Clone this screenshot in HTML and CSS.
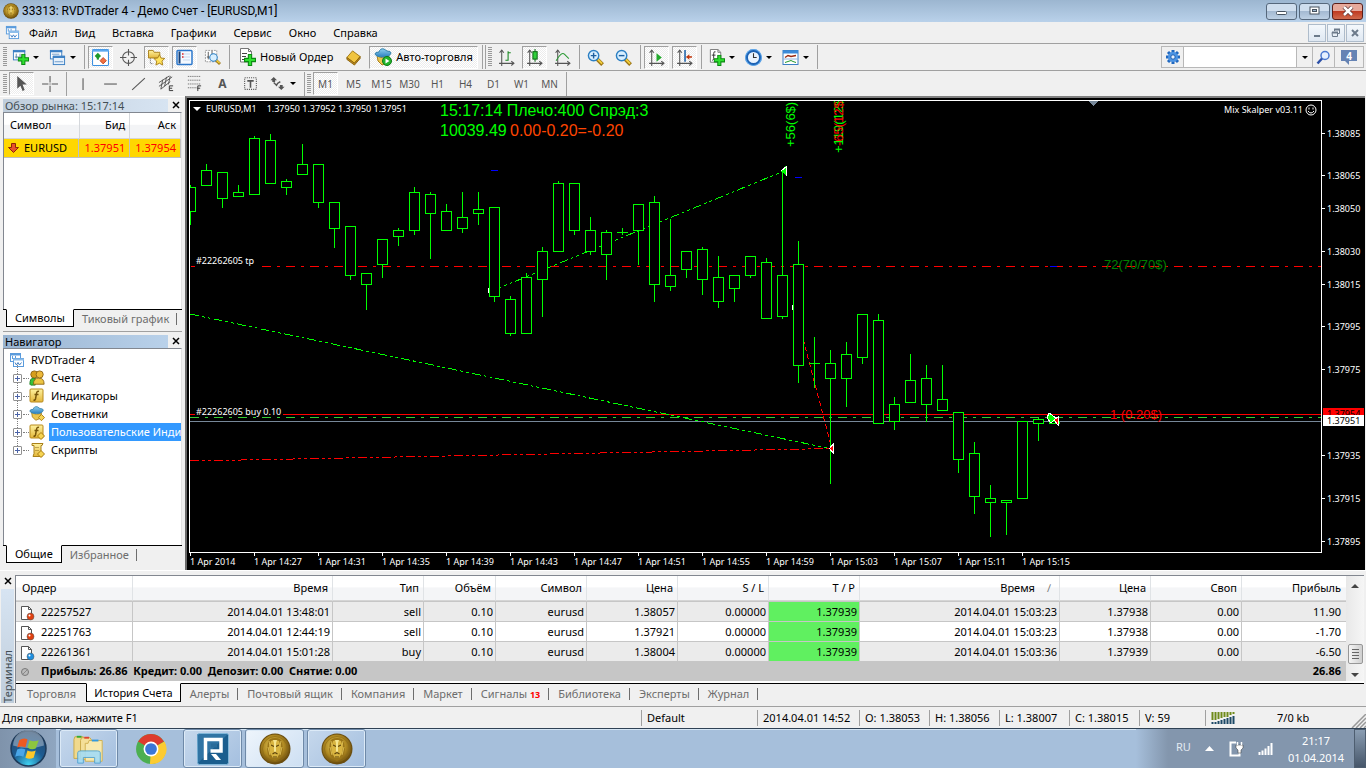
FILE: index.html
```html
<!DOCTYPE html>
<html lang="ru">
<head>
<meta charset="utf-8">
<title>33313: RVDTrader 4 - Демо Счет - [EURUSD,M1]</title>
<link rel="stylesheet" href="styles.css">
</head>
<body>
<svg class="defs" aria-hidden="true">
  <defs>
    <radialGradient id="gold" cx=".45" cy=".4" r=".6"><stop offset="0" stop-color="#e8d060"/><stop offset=".6" stop-color="#b08a22"/><stop offset="1" stop-color="#6b4c0c"/></radialGradient>
    <linearGradient id="ygrad" x1="0" y1="0" x2="0" y2="1"><stop offset="0" stop-color="#fff3a0"/><stop offset="1" stop-color="#e3b63a"/></linearGradient>
    <linearGradient id="bgrad" x1="0" y1="0" x2="0" y2="1"><stop offset="0" stop-color="#8fd0f0"/><stop offset="1" stop-color="#2a7fc0"/></linearGradient>
    <radialGradient id="orb" cx=".5" cy=".95" r=".9"><stop offset="0" stop-color="#3fd0f0"/><stop offset=".5" stop-color="#1c5c92"/><stop offset="1" stop-color="#274a70"/></radialGradient>
    <symbol id="lion" viewBox="0 0 32 32"><circle cx="16" cy="16" r="15.5" fill="#6b4f12"/><circle cx="16" cy="16" r="14.500" fill="url(#gold)"/><circle cx="16" cy="16" r="12.500" fill="none" stroke="#8a6a18" stroke-width=".7"/><path d="M9 9q1-4 7-4t7 4l1 7-1 6-3 4-4 2-4-2-3-4-1-6z" fill="#9a7518"/><path d="M12 8q4-2 8 0l2 6-1 6-3 5h-4l-3-5-1-6z" fill="#d8b440"/><path d="M12 12l3 1.500M20 12l-3 1.500M13.500 21l2.500-1.500 2.500 1.500M14 24h4" stroke="#5f450c" fill="none" stroke-width="1.200"/><path d="M10 8l1 5M9 14l2 8M22 8l-1 5M23 14l-2 8" stroke="#e8cc60" fill="none" stroke-width=".8"/><path d="M15 9h2v9l-1 1.500-1-1.500zM14 7h4l-1 3h-2z" fill="#f5e590"/></symbol>
    <symbol id="plus" viewBox="0 0 11 11"><path d="M4 .5h3v3.5h3.500v3H7v3.500H4V7H.5V4H4z" fill="#2fe02f" stroke="#0b8a12"/></symbol>
    <symbol id="charts" viewBox="0 0 16 16"><rect x="1.500" y="1.500" width="10" height="8" fill="#fff" stroke="#5a9bdc"/><path d="M1 2.500h11" stroke="#5a9bdc" stroke-width="2"/><path d="M3.500 4v3M6.500 4v2" stroke="#5a9bdc"/><rect x="4.500" y="6.500" width="10" height="8" fill="#fff" stroke="#5a9bdc"/><path d="M4 7.500h11" stroke="#8bbcea" stroke-width="2"/><path d="M6 10.500l1.500 2.500 1.500-2.500 1.500 2.500 2-2.500" fill="none" stroke="#3f7ec4"/></symbol>
    <symbol id="axes" viewBox="0 0 16 16"><path d="M3.500 1v15M1 13.500h14" stroke="#555" fill="none"/><path d="M1.500 3.500l2-2.500 2 2.500M12.500 11.500l2.500 2-2.500 2" stroke="#555" fill="none"/></symbol>
    <symbol id="page" viewBox="0 0 16 16"><path d="M2.500.5h8l3 3v10.500h-11z" fill="#fff" stroke="#777"/><path d="M10.500.5v3h3" fill="none" stroke="#777"/></symbol>
    <symbol id="hat" viewBox="0 0 18 18"><path d="M3 7q5 5 12 1l-2 7-5 2-4-4z" fill="#ecc650" stroke="#a97f1a"/><path d="M1 6q0-2 4-2 1-4 5-3l3 2q4 0 4 2-1 4-8 4-7 0-8-3z" fill="url(#bgrad)" stroke="#3683ad"/></symbol>
    <symbol id="diamond" viewBox="0 0 8 8"><path d="M4 .5L7.500 4 4 7.500.5 4z" fill="#f6d452" stroke="#a87a10"/></symbol>
    <symbol id="fx" viewBox="0 0 16 16"><rect x="1" y="1" width="13" height="13" rx="1" fill="url(#ygrad)" stroke="#b88a1c"/><path d="M10 3.500q-2-1-2.500 2L6.500 11q-.5 1.500-2 1M5.500 6.500h4" fill="none" stroke="#76550a" stroke-width="1.500"/></symbol>
    <symbol id="lens" viewBox="0 0 18 18"><path d="M10.500 10.500l6 6" stroke="#9b7414" stroke-width="4"/><path d="M11 10.500l5 5" stroke="#f2cf3c" stroke-width="2"/><circle cx="7" cy="7" r="5.500" fill="#d8efff" stroke="#2b7fc3" stroke-width="1.500"/></symbol>
    <symbol id="deal" viewBox="0 0 16 16"><path d="M2.500 1.500h7l3 3v10h-10z" fill="#fff" stroke="#555"/><path d="M9.500 1.500v3h3" fill="none" stroke="#555"/><circle cx="11.500" cy="11.500" r="3.500" fill="currentColor" stroke="#555" stroke-width=".5"/><circle cx="10.500" cy="10.500" r="1" fill="#fff"/></symbol>
  </defs>
</svg>

<header class="titlebar">
  <svg class="app-icon" viewBox="0 0 32 32"><use href="#lion"/></svg>
  <h1 class="window-title">33313: RVDTrader 4 - Демо Счет - [EURUSD,M1]</h1>
  <div class="window-buttons">
    <button class="win-btn" aria-label="Свернуть"><svg width="12" height="10"><rect x=".5" y="5.500" width="10" height="3" rx="1" fill="#fff" stroke="#46525f"/></svg></button>
    <button class="win-btn" aria-label="Развернуть"><svg width="12" height="10"><rect x="1" y="1" width="9" height="7" fill="#fff" stroke="#46525f"/><rect x="3.500" y="3.500" width="4" height="2" fill="#9fb8d0" stroke="#46525f"/></svg></button>
    <button class="win-btn win-close" aria-label="Закрыть"><svg width="12" height="10"><path d="M2 1l8 8M10 1l-8 8" stroke="#5a3030" stroke-width="4"/><path d="M2 1l8 8M10 1l-8 8" stroke="#fff" stroke-width="2.500"/></svg></button>
  </div>
</header>

<nav class="menubar">
  <svg class="menu-icon" viewBox="0 0 16 16"><use href="#charts"/></svg>
  <button>Файл</button><button>Вид</button><button>Вставка</button><button>Графики</button><button>Сервис</button><button>Окно</button><button>Справка</button>
  <div class="mdi-buttons">
    <button aria-label="Свернуть окно"><svg width="10" height="10"><path d="M2 8h6" stroke="#6c7a8a" stroke-width="2"/></svg></button>
    <button aria-label="Восстановить окно"><svg width="10" height="10"><path d="M3.500 3V1.500h5v4H7M1 4.500h5.500v4h-5z" fill="none" stroke="#6c7a8a"/><path d="M3 1.500h6M1 4.500h6" stroke="#6c7a8a" stroke-width="2"/></svg></button>
    <button aria-label="Закрыть окно"><svg width="10" height="10"><path d="M2 2l6 6M8 2L2 8" stroke="#6c7a8a" stroke-width="2"/></svg></button>
  </div>
</nav>

<div class="toolbar toolbar-main">
  <i class="grip"></i>
  <button class="tool drop" aria-label="Новый график"><svg viewBox="0 0 18 18"><rect x="1.500" y="1.500" width="12" height="10" fill="#fff" stroke="#3b7fc4"/><path d="M1 2.500h13" stroke="#3b7fc4" stroke-width="2"/><path d="M4.500 5v5M3 8.500h8M8.500 5v3" stroke="#5b87a8"/><use href="#plus" x="6" y="5" width="12" height="12"/></svg></button>
  <button class="tool drop" aria-label="Профили"><svg viewBox="0 0 18 18"><rect x="1.500" y="1.500" width="12" height="9" fill="#fff" stroke="#3b7fc4"/><path d="M1 2.500h13" stroke="#3b7fc4" stroke-width="2"/><rect x="4.500" y="7.500" width="12" height="9" fill="#e7f1fb" stroke="#3b7fc4"/><path d="M4 8.500h13" stroke="#3b7fc4" stroke-width="2"/><path d="M3 5.500h8M6 13.500h9" stroke="#6a98c8"/></svg></button>
  <i class="sep"></i>
  <button class="tool on" aria-label="Обзор рынка"><svg viewBox="0 0 16 16"><rect x=".5" y=".5" width="15" height="15" rx="1" fill="#fff" stroke="#3b8fe0"/><path d="M0 1.500h16" stroke="#5ba8ee" stroke-width="2"/><path d="M5.500 3.500L8.500 6.500 5.500 9.500 2.500 6.500z" fill="#1d9a2c"/><path d="M5.500 7v3" stroke="#1d9a2c" stroke-width="2"/><path d="M10.500 14l-3-3 3-3 3 3z" fill="#f07040" stroke="#b03010" stroke-width=".7"/></svg></button>
  <button class="tool" aria-label="Окно данных"><svg viewBox="0 0 16 16"><circle cx="8" cy="8" r="5.500" fill="none" stroke="#555"/><path d="M8 0v6M8 10v6M0 8h6M10 8h6" stroke="#555"/></svg></button>
  <button class="tool on" aria-label="Навигатор"><svg viewBox="0 0 18 18"><path d="M.5 1.500h5l1 2h6v6H.5z" fill="url(#ygrad)" stroke="#a9801a"/><path d="M2.500 10v5.500h3" stroke="#555" stroke-dasharray="1 1" fill="none"/><path d="M12 6l1.800 3.600 4 .4-3 2.800.8 4.200-3.600-2-3.600 2 .8-4.200-3-2.800 4-.4z" fill="#ffe25c" stroke="#a9801a"/></svg></button>
  <button class="tool on" aria-label="Терминал"><svg viewBox="0 0 17 16"><rect x="1" y="1" width="15" height="14" rx="1" fill="#f4f9ff" stroke="#2c78cc" stroke-width="1.500"/><path d="M3.500 2v12" stroke="#173f74" stroke-width="2"/><path d="M7 4.500h7M7 7.500h7M7 10.500h7" stroke="#c6d9ef"/><path d="M6 4.500h1.500M6 7.500h1.500" stroke="#e02020" stroke-width="1.500"/></svg></button>
  <button class="tool" aria-label="Тестер стратегий"><svg viewBox="0 0 18 18"><rect x="1.500" y="1.500" width="12" height="12" fill="#fff" stroke="#999" stroke-dasharray="2 1"/><path d="M4.500 3v8M8.500 2v6M3 8.500h3" stroke="#555"/><use href="#lens" x="5" y="4" width="13" height="13"/></svg></button>
  <i class="sep"></i>
  <button class="tool labelled"><svg viewBox="0 0 18 18"><use href="#page" x="0" y="0" width="16" height="16"/><path d="M4 5.500h5M4 8.500h4M4 11.500h4" stroke="#444"/><use href="#plus" x="6" y="6" width="12" height="12"/></svg>Новый Ордер</button>
  <button class="tool" aria-label="Редактор"><svg viewBox="0 0 18 18"><path d="M8 2l8 6-6 7-8-6z" fill="#f0c440" stroke="#a3780f"/><path d="M2 9v2l8 6 6-7V8l-6 7z" fill="#c08b18" stroke="#8a6410"/></svg></button>
  <button class="tool labelled on"><svg viewBox="0 0 18 18"><use href="#hat" width="18" height="18"/><circle cx="13" cy="13" r="4.500" fill="#23b52b" stroke="#0c7b16"/><path d="M11.500 10.500l4 2.500-4 2.500z" fill="#fff"/></svg>Авто-торговля</button>
  <i class="sep tight"></i><i class="sep tight"></i><i class="grip"></i>
  <button class="tool" aria-label="Бары"><svg viewBox="0 0 16 16"><use href="#axes" width="16" height="16"/><path d="M9.500 2v9M9.500 3.500H12M7 10.500h2.500" stroke="#16861e" fill="none"/></svg></button>
  <button class="tool on" aria-label="Свечи"><svg viewBox="0 0 16 16"><use href="#axes" width="16" height="16"/><path d="M8.500 0v12" stroke="#116b18"/><rect x="6.500" y="2.500" width="4" height="7" fill="#2fd03a" stroke="#116b18"/></svg></button>
  <button class="tool" aria-label="Линия"><svg viewBox="0 0 16 16"><use href="#axes" width="16" height="16"/><path d="M2 11q5-9 8-6l4 4" stroke="#2a9a34" fill="none"/></svg></button>
  <i class="sep"></i>
  <button class="tool" aria-label="Увеличить"><svg viewBox="0 0 18 18"><use href="#lens" width="18" height="18"/><path d="M4 7h6M7 4v6" stroke="#1d5f9e" stroke-width="1.500"/></svg></button>
  <button class="tool" aria-label="Уменьшить"><svg viewBox="0 0 18 18"><use href="#lens" width="18" height="18"/><path d="M4 7h6" stroke="#1d5f9e" stroke-width="1.500"/></svg></button>
  <i class="sep"></i>
  <button class="tool on" aria-label="Автопрокрутка"><svg viewBox="0 0 16 16"><use href="#axes" width="16" height="16"/><path d="M8 4l5 4-5 4z" fill="#22aa2c"/></svg></button>
  <button class="tool on" aria-label="Сдвиг графика"><svg viewBox="0 0 16 16"><use href="#axes" width="16" height="16"/><path d="M8.500 1v11" stroke="#2266aa" stroke-width="1.500"/><path d="M10 7.500h5" stroke="#c03a10" stroke-width="1.500"/><path d="M9.500 7.500L12.500 5v5z" fill="#c03a10"/></svg></button>
  <i class="sep"></i>
  <button class="tool drop" aria-label="Индикаторы"><svg viewBox="0 0 18 18"><use href="#page" width="16" height="16"/><path d="M8 3q-2-1-2 2v5q0 2-1.500 2M4 6.500h4" stroke="#333" fill="none"/><use href="#plus" x="6" y="6" width="12" height="12"/></svg></button>
  <button class="tool drop" aria-label="Периоды"><svg viewBox="0 0 16 16"><circle cx="8" cy="8" r="6.500" fill="#eaf4ff" stroke="#1c62b4" stroke-width="2.500"/><circle cx="8" cy="8" r="7.500" fill="none" stroke="#5fa8ec"/><path d="M8 4v4h3" stroke="#333" fill="none"/></svg></button>
  <button class="tool drop" aria-label="Шаблоны"><svg viewBox="0 0 17 16"><rect x="1" y="1" width="15" height="14" fill="#fff" stroke="#3b7fc4"/><path d="M1 2.500h15" stroke="#3b8ad8" stroke-width="3"/><path d="M3 8l3-2 3 1 5-1" stroke="#9a2a10" fill="none" stroke-width="1.500"/><path d="M1 9.500h15" stroke="#8fb4dc"/><path d="M3 13l3-1 3-1 2 1 3 1" stroke="#23982c" fill="none"/></svg></button>
  <i class="sep"></i>
  <form class="search" onsubmit="return false">
    <button aria-label="Настройки поиска"><svg width="16" height="16" viewBox="0 0 16 16"><path d="M8 1v14M1 8h14M3 3l10 10M13 3L3 13" stroke="#2068c0" stroke-width="3"/><circle cx="8" cy="8" r="5" fill="#4c94e4"/><circle cx="8" cy="8" r="2.200" fill="#e8f2ff" stroke="#1c5cae"/></svg></button>
    <input type="text" aria-label="Поиск">
    <button class="search-drop" aria-label="История поиска"><i class="caret"></i></button>
    <button aria-label="Найти"><svg width="15" height="15" viewBox="0 0 15 15"><circle cx="9" cy="5.500" r="4" fill="#e6f0ff" stroke="#4a78d0" stroke-width="1.500"/><path d="M6 8.500L1.500 13.500" stroke="#2c50a8" stroke-width="2.500"/></svg></button>
    <button class="search-chat" aria-label="Сообщения: 4"><svg width="16" height="17" viewBox="0 0 16 17"><path d="M0 1h16v11H8l0 4-4-4H0z" fill="#6583b4"/></svg><b>4</b></button>
  </form>
</div>

<div class="toolbar toolbar-draw">
  <i class="grip"></i>
  <button class="tool on" aria-label="Курсор"><svg viewBox="0 0 16 16"><path d="M4 1v12l3-3 2 5 2-1-2-5h4z" fill="#555"/></svg></button>
  <button class="tool" aria-label="Перекрестие"><svg viewBox="0 0 16 16"><path d="M8.500 1v6M8.500 10v6M1 8.500h6M10 8.500h6M8 8.500h1" stroke="#555"/></svg></button>
  <i class="sep"></i>
  <button class="tool" aria-label="Вертикальная линия"><svg viewBox="0 0 16 16"><path d="M8.500 3v11" stroke="#555"/></svg></button>
  <button class="tool" aria-label="Горизонтальная линия"><svg viewBox="0 0 16 16"><path d="M2 8.500h12" stroke="#555"/></svg></button>
  <button class="tool" aria-label="Трендовая линия"><svg viewBox="0 0 16 16"><path d="M2 14L14 3" stroke="#555"/></svg></button>
  <button class="tool" aria-label="Канал"><svg viewBox="0 0 18 18"><path d="M1 12L15 2M1 8L12 1M3 15L13 7M5 5l-2 10M9 2L7 12M13 1l-2 9" stroke="#555" fill="none"/><path d="M16 11.500h-4v5h4M12 14h3" stroke="#333" fill="none"/></svg></button>
  <button class="tool" aria-label="Фибоначчи"><svg viewBox="0 0 18 18"><path d="M2 1.500h14M2 5.500h14M2 9.500h14M2 13.500h9" stroke="#555" stroke-dasharray="1 1"/><path d="M16 11.500h-3.500v5.500M12 14h3" stroke="#333" fill="none"/></svg></button>
  <button class="tool glyph">A</button>
  <button class="tool" aria-label="Метка"><svg viewBox="0 0 16 16"><rect x="2.500" y="2.500" width="11" height="11" fill="none" stroke="#555" stroke-dasharray="1 1"/><path d="M5 5.500h6M8 5v7" stroke="#555" stroke-width="1.500"/></svg></button>
  <button class="tool drop" aria-label="Стрелки"><svg viewBox="0 0 18 18"><path d="M5 2l3.500 3.500H6.500v2h-3v-2h-2zM13 16l-3.500-3.500h2v-2h3v2h2z" fill="#555"/><path d="M5 8l3 3 1-2 3-2" fill="none" stroke="#555" stroke-width="1.500"/></svg></button>
  <i class="sep tight"></i><i class="grip"></i>
  <button class="tool glyph period on">M1</button><button class="tool glyph period">M5</button><button class="tool glyph period">M15</button><button class="tool glyph period">M30</button><button class="tool glyph period">H1</button><button class="tool glyph period">H4</button><button class="tool glyph period">D1</button><button class="tool glyph period">W1</button><button class="tool glyph period">MN</button>
  <i class="sep"></i>
</div>

<main class="workspace">
  <aside class="side">
    <section class="panel">
      <header class="panel-head inactive"><h2>Обзор рынка: 15:17:14</h2><button aria-label="Закрыть обзор рынка"><svg width="8" height="8"><path d="M1 1l6 6M7 1L1 7" stroke="#000" stroke-width="1.500"/></svg></button></header>
      <div class="panel-body">
        <table class="quotes">
          <thead><tr><th class="q-symbol">Символ</th><th>Бид</th><th>Аск</th></tr></thead>
          <tbody><tr><td class="q-name"><svg width="11" height="10"><path d="M3.500.5h4v4h3L5.500 9.500l-5-5h3z" fill="#e8502c" stroke="#8c2408"/></svg>EURUSD</td><td>1.37951</td><td>1.37954</td></tr></tbody>
        </table>
      </div>
      <div class="tabs side-tabs"><button class="active">Символы</button><button>Тиковый график</button></div>
    </section>
    <section class="panel">
      <header class="panel-head"><h2>Навигатор</h2><button aria-label="Закрыть навигатор"><svg width="8" height="8"><path d="M1 1l6 6M7 1L1 7" stroke="#000" stroke-width="1.500"/></svg></button></header>
      <div class="panel-body">
        <ul class="tree">
          <li class="root"><svg viewBox="0 0 16 16"><use href="#charts"/></svg><span>RVDTrader 4</span></li>
          <li><i class="expand"></i><svg viewBox="0 0 18 18"><path d="M1 16q0-7 4-7h2v8H2z" fill="#37c23a" stroke="#147a1a"/><circle cx="6" cy="5" r="4" fill="#d69e1c" stroke="#8c6210"/><path d="M5 16q0-7 6-7t6 7z" fill="#ecc544" stroke="#8c6210"/><circle cx="12" cy="5" r="4" fill="#edb93a" stroke="#8c6210"/></svg><span>Счета</span></li>
          <li><i class="expand"></i><svg viewBox="0 0 16 16"><use href="#fx"/></svg><span>Индикаторы</span></li>
          <li><i class="expand"></i><svg viewBox="0 0 18 18"><use href="#hat" width="17" height="17"/><use href="#diamond" x="10" y="9" width="8" height="8"/></svg><span>Советники</span></li>
          <li class="selected"><i class="expand"></i><svg viewBox="0 0 16 16"><use href="#fx"/><use href="#diamond" x="8" y="8" width="8" height="8"/></svg><span>Пользовательские Индикаторы</span></li>
          <li><i class="expand"></i><svg viewBox="0 0 16 16"><path d="M3 1.500h11l-1 2h-1v8l1 3H4l1-3v-8H3z" fill="url(#ygrad)" stroke="#a9801a"/><path d="M6.500 5.500h4M6.500 8.500h4" stroke="#8c6a18" stroke-dasharray="1 1"/><use href="#diamond" x="8" y="8" width="8" height="8"/></svg><span>Скрипты</span></li>
        </ul>
      </div>
      <div class="tabs side-tabs"><button class="active">Общие</button><button>Избранное</button></div>
    </section>
  </aside>

  <section class="chart" aria-label="График EURUSD,M1">
    <div class="plot">
      <svg class="plot-canvas">
        <g transform="translate(0 -101)" shape-rendering="crispEdges" fill="none">
          <path d="M1 266.500H3000" stroke="red" stroke-dasharray="9 6 3 6" stroke-dashoffset="1"/>
          <path d="M0 414.500H3000" stroke="red"/>
          <path d="M0 417.500H3000" stroke="#32cd32" stroke-dasharray="9 6 3 6"/>
          <path d="M0 421.500H3000" stroke="#778899"/>
          <path d="M0 314L642 449M303 290.500L594 171" stroke="lime" stroke-dasharray="9 3 3 3 3 3"/>
          <path d="M0 461L642 448.500" stroke="red" stroke-dasharray="9 3 3 3 3 3"/>
          <path d="M605 308L642 449" stroke="red" stroke-dasharray="5 3"/>
          <path d="M300.500 288v5M604.500 305v5" stroke="#fff"/>
          <path d="M301 170.500h7M605 177.500h7M860 266.500h7" stroke="#00f"/>
          <g id="candles" stroke="lime" fill="#000"></g>
          <path d="M298.500 288v5M602.500 305v5" stroke="#fff"/>
          <path d="M596 166v9l-5-4.500z" fill="lime"/><path d="M591.500 170.500l5-4v9" stroke="#fff"/>
          <path d="M644 444v9l-5-5z" fill="red"/><path d="M639.500 448.500l4-5v10z" stroke="#fff"/>
          <path d="M859 413l7 5-5 5-4-5z" fill="lime" stroke="#fff"/><path d="M864 420l4-3v8z" fill="red" stroke="#fff"/>
          <path d="M898 101h10l-5 5z" fill="#778899"/>
        </g>
        <g transform="translate(0 -101)" class="hud">
          <text x="250" y="116" fill="lime">15:17:14 Плечо:400 Спрэд:3</text>
          <text x="250" y="136" fill="lime">10039.49</text>
          <text x="320" y="136" fill="#ff4500">0.00-0.20=-0.20</text>
          <g class="hud-small">
            <text transform="translate(605 147) rotate(-90)" fill="lime">+56(6$)</text>
            <text transform="translate(653 153) rotate(-90)" fill="lime">+119(12$)</text>
            <text transform="translate(653 146) rotate(-90)" fill="red">-65(12$)</text>
            <text x="914" y="269" fill="green">72(70/70$)</text>
            <text x="920" y="419" fill="red">1 (0.20$)</text>
          </g>
        </g>
      </svg>
      <p class="ohlc"><i></i><span>EURUSD,M1</span>1.37950 1.37952 1.37950 1.37951</p>
      <p class="expert">Mix Skalper v03.11<svg width="12" height="12"><circle cx="6" cy="6" r="5" fill="none" stroke="#fff"/><path d="M4 3.500v2M8 3.500v2M3 7q3 4 6 0" fill="none" stroke="#fff"/></svg></p>
      <span class="order-label order-tp">#22262605 tp</span>
      <span class="order-label order-buy">#22262605 buy 0.10</span>
    </div>
    <svg class="price-axis"><g id="prices" transform="translate(0 -100)"></g></svg>
    <svg class="time-axis" id="times"></svg>
  </section>
</main>

<section class="terminal">
  <div class="terminal-rail"><button aria-label="Закрыть терминал"><svg width="8" height="8"><path d="M1 1l6 6M7 1L1 7" stroke="#000" stroke-width="1.500"/></svg></button><h2>Терминал</h2></div>
  <div class="terminal-body">
    <div class="terminal-grid">
      <table class="history">
        <colgroup><col class="w-order"><col class="w-time"><col class="w-std"><col class="w-vol"><col class="w-std"><col class="w-std"><col class="w-std"><col class="w-std"><col class="w-time"><col class="w-std"><col class="w-std"><col></colgroup>
        <thead><tr><th>Ордер</th><th>Время</th><th>Тип</th><th>Объём</th><th>Символ</th><th>Цена</th><th>S / L</th><th>T / P</th><th>Время<span class="sort">∕</span></th><th>Цена</th><th>Своп</th><th>Прибыль</th></tr></thead>
        <tbody>
          <tr><td><svg class="sell" viewBox="0 0 16 16"><use href="#deal"/></svg>22257527</td><td>2014.04.01 13:48:01</td><td>sell</td><td>0.10</td><td>eurusd</td><td>1.38057</td><td>0.00000</td><td class="hit">1.37939</td><td>2014.04.01 15:03:23</td><td>1.37938</td><td>0.00</td><td>11.90</td></tr>
          <tr><td><svg class="sell" viewBox="0 0 16 16"><use href="#deal"/></svg>22251763</td><td>2014.04.01 12:44:19</td><td>sell</td><td>0.10</td><td>eurusd</td><td>1.37921</td><td>0.00000</td><td class="hit">1.37939</td><td>2014.04.01 15:03:23</td><td>1.37938</td><td>0.00</td><td>-1.70</td></tr>
          <tr><td><svg class="buy" viewBox="0 0 16 16"><use href="#deal"/></svg>22261361</td><td>2014.04.01 15:01:28</td><td>buy</td><td>0.10</td><td>eurusd</td><td>1.38004</td><td>0.00000</td><td class="hit">1.37939</td><td>2014.04.01 15:03:36</td><td>1.37939</td><td>0.00</td><td>-6.50</td></tr>
        </tbody>
        <tfoot><tr><td colspan="11"><svg viewBox="0 0 16 16"><circle cx="6" cy="8" r="3.500" fill="#bbb" stroke="#777"/><path d="M4 10l4-4" stroke="#888"/></svg>Прибыль: 26.86&nbsp; Кредит: 0.00&nbsp; Депозит: 0.00&nbsp; Снятие: 0.00</td><td>26.86</td></tr></tfoot>
      </table>
      <div class="scroll" aria-hidden="true"><i class="up"></i><i class="thumb"></i><i class="down"></i></div>
    </div>
    <div class="tabs terminal-tabs"><button>Торговля</button><button class="active">История Счета</button><button>Алерты</button><button>Почтовый ящик</button><button>Компания</button><button>Маркет</button><button>Сигналы <b>13</b></button><button>Библиотека</button><button>Эксперты</button><button>Журнал</button></div>
  </div>
</section>

<footer class="status">
  <span class="st-help">Для справки, нажмите F1</span><span class="st-profile">Default</span><span class="st-date">2014.04.01 14:52</span><span class="st-price">O: 1.38053</span><span class="st-price">H: 1.38056</span><span class="st-price">L: 1.38007</span><span class="st-price">C: 1.38015</span><span class="st-vol">V: 59</span>
  <span class="st-net"><svg width="24" height="12"><path d="M1.500 0v8M4.500 0v8M7.500 0v7M10.500 0v6M13.500 0v5M16.500 0v5M19.500 0v3M22.500 0v2" stroke="#6f8a1a" stroke-width="2"/><path d="M1.500 10v2M4.500 10v2M7.500 9v3M10.500 8v4M13.500 7v5M16.500 6v6M19.500 5v7M22.500 4v8" stroke="#1c4966" stroke-width="2"/></svg><em>7/0 kb</em></span>
  <svg class="resize" width="15" height="14"><path d="M1 14L15 0M5 14L15 4M9 14l6-6M13 14l2-2" stroke="#999" stroke-width="1.500"/></svg>
</footer>

<nav class="taskbar">
  <button class="start" aria-label="Пуск"><svg viewBox="0 0 36 36"><circle cx="18" cy="18" r="17" fill="url(#orb)" stroke="#1c3a5a" stroke-width="1.500"/><path d="M3 15a15 15 0 0 1 30 0q-15 5-30 0z" fill="#fff" opacity=".35"/><path d="M9 10q4-3 8-1l-2 8q-4-2-8 0z" fill="#ee5a20"/><path d="M19 10q4 2 9 0l-3 8q-4 2-8-1z" fill="#8dc63f"/><path d="M7 19q4-2 8 0l-2 7q-4-2-8 0z" fill="#4aa6e8"/><path d="M17 20q4 2 8 0l-2 7q-4 2-8 0z" fill="#fdc828"/></svg></button>
  <button class="task open" aria-label="Проводник"><svg viewBox="0 0 34 32"><path d="M1 6l1-3h9l2 3h6v20H1z" fill="#f0d98e" stroke="#c9a747"/><path d="M8 7l1-3h9l2 3h6v20H8z" fill="#f4df98" stroke="#c9a747"/><path d="M16 10l1-3h14v22H13V10z" fill="#f8e9ae" stroke="#d0b050"/><path d="M4 3h5" stroke="#3a3" stroke-width="2"/><path d="M12 4h5" stroke="#d43" stroke-width="2"/><path d="M20 7h7" stroke="#39d" stroke-width="2"/><path d="M5 31V20q0-2 3-2h18q3 0 3 2v11h-6v-6H11v6z" fill="#a4dcf5" stroke="#4a9fd0" opacity=".9"/></svg></button>
  <button class="task" aria-label="Chrome"><svg viewBox="0 0 30 30"><circle cx="15" cy="15" r="14" fill="#4caf50"/><path d="M15 15L2.900 8A14 14 0 0 1 27.100 8z" fill="#dd3b2e"/><path d="M15 15L27.600 8A14 14 0 0 1 14 29z" fill="#fccb32"/><circle cx="15" cy="15" r="7" fill="#fff"/><circle cx="15" cy="15" r="5.500" fill="#3b76d6"/></svg></button>
  <button class="task open" aria-label="RVD"><svg viewBox="0 0 32 32"><rect x=".5" y=".5" width="31" height="31" rx="2" fill="#1b5e8e" stroke="#7fb6d8"/><path d="M0 1h31L1 30z" fill="#3f84b2" opacity=".6"/><path d="M8.500 27V6.500H24V18H13.500" fill="none" stroke="#fff" stroke-width="3.500"/><path d="M14 10.500h6v4h-6z" fill="#2a6c9a"/><path d="M14 21h5l5 6h-5z" fill="#fff"/></svg></button>
  <button class="task open current" aria-label="RVDTrader 1"><svg viewBox="0 0 32 32"><use href="#lion"/></svg></button>
  <button class="task open" aria-label="RVDTrader 2"><svg viewBox="0 0 32 32"><use href="#lion"/></svg></button>
  <div class="tray">
    <span class="lang">RU</span>
    <svg width="9" height="5"><path d="M4.500 0L9 5H0z" fill="#fff"/></svg>
    <svg width="16" height="16"><path d="M8 1.500H2.500v13h9V10" fill="none" stroke="#fff" stroke-width="2"/><path d="M8 4h7v3l-2 2v3h-3V9L8 7z" fill="#fff" stroke="#333" stroke-width=".5"/><path d="M9.500 1v3M13.500 1v3" stroke="#fff" stroke-width="1.500"/></svg>
    <svg width="16" height="12"><path d="M1.500 9v3M4.500 7.500V12M7.500 5.500V12M10.500 3V12M13.500 0v12" stroke="#fff" stroke-width="2"/></svg>
    <time class="clock"><span>21:17</span><span>01.04.2014</span></time>
    <button class="peek" aria-label="Показать рабочий стол"></button>
  </div>
</nav>
<script src="script.js"></script>
</body>
</html>
```

FILE: styles.css
```css
:root {
  --ui: "Noto Sans", "Open Sans", sans-serif;
  --face: #f0f0f0;
  --line: #a0a0a0;
}
* { box-sizing: border-box; }
body {
  margin: 0;
  height: 100vh;
  overflow: hidden;
  display: flex;
  flex-direction: column;
  font: 11px/14px var(--ui);
  color: #000;
  background: var(--face);
}
h1, h2, p, ul { margin: 0; padding: 0; font-size: inherit; font-weight: normal; }
button { font: inherit; color: inherit; padding: 0; margin: 0; border: 0; background: none; }
svg { display: block; flex: none; }
.defs { position: absolute; width: 0; height: 0; }

/* Title and menu */
.titlebar { display: flex; align-items: center; height: 22px; flex: none; padding: 0 3px; background: linear-gradient(#9cb6d0, #b9d1ea); }
.app-icon { width: 16px; height: 16px; }
.window-title { flex: 1; margin-left: 3px; font: 12px/20px Roboto, sans-serif; }
.window-buttons { display: flex; gap: 2px; }
.win-btn { display: grid; place-items: center; width: 31px; height: 17px; border: 1px solid #56687c; border-radius: 3px; background: linear-gradient(#cfdeee 45%, #a4bad2 50%, #bdd0e4); }
.win-close { background: linear-gradient(#e6a99b 45%, #bf3b22 50%, #d06a4c); border-color: #5a1d18; }
.menubar { display: flex; align-items: center; gap: 1px; height: 21px; flex: none; padding: 0 2px 0 5px; }
.menu-icon { width: 15px; height: 15px; }
.menubar > button { padding: 0 8px; line-height: 18px; }
.mdi-buttons { display: flex; gap: 1px; margin-left: auto; }
.mdi-buttons button { display: grid; place-items: center; width: 18px; height: 18px; border: 1px solid #aebccb; background: linear-gradient(#f4f8fc, #dfe8f2); }

/* Toolbars */
.toolbar { display: flex; align-items: center; flex: none; height: 27px; border-top: 1px solid var(--line); padding: 0 2px; }
.toolbar-draw { height: 26px; }
.grip { width: 4px; height: 20px; margin: 0 2px 0 1px; background: repeating-linear-gradient(#999 0 1px, transparent 1px 2px); }
.sep { width: 1px; height: 24px; margin: 0 3px 0 1px; background: var(--line); }
.sep.tight { margin: 0 1px; }
.tool { display: flex; align-items: center; justify-content: center; flex: none; width: 25px; height: 23px; margin-right: 3px; border: 1px solid transparent; }
.tool svg { width: 17px; height: 17px; }
.tool.on { border-color: #a0a0a0 #fff #fff #a0a0a0; background: repeating-conic-gradient(#fff 0 25%, #ececec 0 50%) 0 0 / 2px 2px; }
.tool.drop { width: 34px; justify-content: space-between; padding: 0 3px 0 2px; }
.tool.drop::after, .caret { content: ""; border: 3px solid transparent; border-top-color: #000; border-bottom: 0; }
.tool.labelled { width: auto; padding: 0 4px; gap: 4px; }
.tool.labelled svg { width: 18px; height: 18px; }
.glyph { color: #555; font-size: 10px; }
.glyph:not(.period) { font-size: 12px; font-weight: bold; }
.search { display: flex; flex: none; margin-left: auto; height: 22px; border: 1px solid #b8b8b8; }
.search button { display: grid; place-items: center; width: 22px; border-right: 1px solid #b8b8b8; }
.search input { width: 112px; border: 0; padding: 0 3px; background: #fff; font: inherit; }
.search .search-drop { width: 17px; border-left: 1px solid #b8b8b8; }
.search .search-chat { width: 28px; border: 0; color: #fff; }
.search-chat svg, .search-chat b { grid-area: 1 / 1; }
.search-chat b { font-size: 10px; padding-bottom: 3px; }

/* Side panels */
.workspace { display: flex; flex: 1; min-height: 0; }
.side { display: flex; flex-direction: column; width: 185px; flex: none; padding: 1px 3px 3px; border-top: 1px solid #fff; }
.panel { display: flex; flex-direction: column; flex: 1; min-height: 0; }
.panel + .panel { border-top: 1px solid var(--line); padding-top: 2px; }
.panel-head { display: flex; align-items: center; justify-content: space-between; height: 14px; flex: none; }
.panel-head h2 { width: 165px; padding-left: 2px; line-height: 13px; background: linear-gradient(90deg, #99b4d1, #b9d1ea); }
.panel-head.inactive h2 { color: #434e54; background: linear-gradient(90deg, #bfcddb, #d7e4f2); }
.panel-head button { padding: 2px; }
.panel-body { flex: 1; min-height: 0; overflow: hidden; background: #fff; border: 1px solid #828790; border-bottom: 0; border-right-color: #e3e3e3; }
.quotes { width: 100%; border-collapse: collapse; table-layout: fixed; }
.quotes th, .quotes td { font-weight: normal; text-align: right; padding: 0 4px; border-right: 1px solid #d5d8dc; overflow: hidden; }
.quotes th { height: 25px; background: linear-gradient(#fff 45%, #f3f4f6 50%); border-bottom: 1px solid #d5d5d5; }
.quotes th.q-symbol { width: 75px; text-align: left; padding-left: 6px; }
.quotes td { height: 19px; color: #f00; background: #ffd700; border-color: silver; border-bottom: 1px solid silver; }
.quotes .q-name { display: flex; align-items: center; gap: 5px; color: #000; }
.tabs { display: flex; flex: none; color: #6d6d6d; }
.tabs button { position: relative; }
.tabs button:not(.active)::after { content: ""; position: absolute; right: 0; top: 4px; height: 12px; border-right: 1px solid #6d6d6d; }
.tabs .active { color: #000; background: #fff; border: 1px solid #000; border-top-color: #fff; }
.side-tabs { height: 22px; border-top: 1px solid #000; padding-left: 3px; }
.side-tabs button { height: 18px; margin-top: -1px; padding: 0 8px; }
.side-tabs button:not(.active) { height: 20px; }
.tree { list-style: none; padding-top: 2px; }
.tree li { display: flex; align-items: center; height: 18px; padding-left: 9px; white-space: nowrap; }
.tree svg { width: 16px; height: 16px; }
.tree span { padding: 0 2px; margin-left: 4px; line-height: 18px; }
.tree .root { padding-left: 5px; }
.tree .selected span { color: #fff; background: #3399ff; }
.expand { position: relative; flex: none; width: 9px; height: 9px; margin-right: 7px; border: 1px solid #919191; border-radius: 1px; background: linear-gradient(#4b63a7, #4b63a7) center / 5px 1px no-repeat, linear-gradient(#4b63a7, #4b63a7) center / 1px 5px no-repeat, #fff; }
.expand::before { content: ""; position: absolute; left: 3px; top: -10px; height: 9px; border-left: 1px dotted #808080; }
.expand::after { content: ""; position: absolute; left: 9px; top: 3px; width: 6px; border-top: 1px dotted #808080; }

/* Chart */
.chart { display: grid; flex: 1; min-width: 0; grid-template: 1fr 17px / 1fr 43px; margin-right: 1px; padding: 2px 0 0 2px; background: #000; border-top: 2px solid #808080; border-left: 2px solid #696969; color: #fff; font-size: 9px; line-height: 12px; }
.plot { position: relative; border: 1px solid #fff; overflow: hidden; }
.plot-canvas { position: absolute; width: 100%; height: 100%; }
.price-axis { width: 100%; height: 100%; overflow: hidden; }
.time-axis { grid-column: 1 / 3; width: 100%; height: 17px; }
.price-axis text, .time-axis text { font: 9px var(--ui); fill: #fff; }
.hud text { font: 16px "Liberation Sans", sans-serif; }
.hud .hud-small text { font-size: 13px; }
.ohlc, .expert { position: absolute; top: 2px; display: flex; align-items: center; white-space: pre; }
.ohlc { left: 3px; }
.ohlc i { border: 4px solid transparent; border-top-color: #fff; border-bottom: 0; }
.ohlc span { margin: 0 10px 0 5px; }
.expert { right: 4px; top: 3px; gap: 2px; }
.order-label { position: absolute; left: 5px; padding: 0 2px 0 1px; background: #000; }
.order-tp { top: 154px; }
.order-buy { top: 305px; line-height: 11px; }

/* Terminal */
.terminal { display: flex; flex: none; padding: 4px 2px 3px 0; border-top: 1px solid #fff; border-bottom: 1px solid var(--line); }
.terminal-rail { display: flex; flex-direction: column; align-items: center; width: 15px; flex: none; }
.terminal-rail button { padding: 2px; }
.terminal-rail h2 { flex: 1; margin-top: 2px; writing-mode: vertical-rl; transform: rotate(180deg); line-height: 13px; color: #434e54; background: linear-gradient(#bfcddb, #d7e4f2); }
.terminal-body { flex: 1; min-width: 0; border-top: 1px solid #828790; border-left: 1px solid #828790; }
.terminal-grid { display: flex; background: #fff; padding-bottom: 2px; }
.history { flex: 1; width: 100%; min-width: 0; table-layout: fixed; border-collapse: separate; border-spacing: 0; }
.w-order { width: 117px; }
.w-time { width: 200px; }
.w-std { width: 91px; }
.w-vol { width: 72px; }
.history th { height: 25px; padding: 0 4px; font-weight: normal; text-align: right; background: linear-gradient(#fff 45%, #f4f5f7 50%); border-right: 1px solid #e0e3e6; border-bottom: 1px solid #d5d5d5; }
.history td { height: 20px; padding: 0 2px; line-height: 18px; text-align: right; white-space: nowrap; border-right: 1px solid #c6c6c6; border-top: 1px solid #c6c6c6; }
.history tr > :first-child { text-align: left; padding-left: 6px; }
.history tr > :last-child { border-right: 0; padding-right: 5px; }
.history td svg { display: inline-block; width: 16px; height: 16px; margin: -2px 6px -2px -3px; vertical-align: middle; }
.history tbody tr:nth-child(odd) { background: #ebebeb; }
.history .hit { background: #60f060; background-clip: padding-box; }
.history tfoot td { background: #c6c6c6; border: 0; font-weight: bold; }
.sell { color: #e04010; }
.buy { color: #1e8fe0; }
.sort { margin: 0 4px 0 12px; color: #777; }
.scroll { display: flex; flex-direction: column; align-items: center; width: 18px; flex: none; padding: 8px 0 4px; background: linear-gradient(90deg, #e8e8e8, #f6f6f6); }
.scroll .up, .scroll .down { border: 4px solid transparent; }
.scroll .up { border-top: 0; border-bottom-color: #444; margin-bottom: auto; }
.scroll .down { border-bottom: 0; border-top-color: #444; margin-top: 9px; }
.scroll .thumb { width: 15px; height: 20px; border: 1px solid #979797; border-radius: 2px; background: repeating-linear-gradient(#666 0 1px, transparent 1px 3px) center / 7px 10px no-repeat, linear-gradient(90deg, #f5f5f5, #cfcfcf); }
.terminal-tabs { height: 20px; border-top: 1px solid #000; background: var(--face); }
.terminal-tabs button { padding: 2px 9px 0; height: 18px; }
.terminal-tabs button:first-child { padding: 2px 10px 0 11px; }
.terminal-tabs button.active { margin-top: -1px; padding: 0 7px; height: 19px; }
.terminal-tabs button:first-child::after { display: none; }
.terminal-tabs b { color: #f00; font-size: 9px; }

/* Status bar */
.status { display: flex; flex: none; align-items: center; height: 21px; padding-left: 2px; position: relative; }
.status > span { padding-left: 5px; border-left: 1px solid var(--line); line-height: 16px; white-space: nowrap; }
.status > .st-help { flex: 1; border: 0; padding: 0; }
.st-profile { width: 116px; }
.st-date { width: 102px; }
.st-price { width: 70px; }
.st-vol { width: 66px; }
.status .st-net { display: flex; align-items: center; width: 161px; gap: 42px; }
.st-net em { font-style: normal; }
.resize { position: absolute; right: 0; bottom: 0; }

/* Taskbar */
.taskbar { display: flex; flex: none; height: 40px; gap: 3px; border-top: 1px solid #2f4154; background: linear-gradient(#d5e6f5 0 1px, #a6bfdb 1px); }
.start { display: grid; place-items: center; width: 56px; background: linear-gradient(90deg, #7f93ab, #8fa6c0); }
.start svg { width: 37px; height: 37px; }
.task { display: grid; place-items: center; width: 59px; border: 1px solid transparent; }
.task svg { width: 32px; height: 32px; }
.task.open { border-color: #6e89a8; border-radius: 3px; box-shadow: inset 0 0 0 1px #dceaf7; background: linear-gradient(135deg, #c6d8ec, #a4bfdf); }
.task.current { background: linear-gradient(135deg, #eef5fc, #cddff2); }
.tray { display: flex; align-items: center; width: 230px; margin-left: auto; padding-left: 40px; gap: 14px; color: #fff; background: linear-gradient(90deg, #a6bfdb, #8396ad 32px); }
.lang { color: #e2e9f1; padding-bottom: 4px; }
.clock { display: flex; flex-direction: column; align-items: center; flex: 1; line-height: 17px; }
.peek { align-self: stretch; width: 14px; margin-left: -4px; border: 1px solid #4e5e70; background: linear-gradient(#8a9db2, #46566a); }
```

FILE: script.js
```js
const NS = 'http://www.w3.org/2000/svg';

function add(parent, name, attrs, text) {
  const node = document.createElementNS(NS, name);
  for (const key in attrs) node.setAttribute(key, attrs[key]);
  if (text) node.textContent = text;
  parent.appendChild(node);
}

// One bar per minute: high, body top, body bottom, low.
const bars = [
  [185,187,211,224],[164,170,185,185],[172,172,198,207],[185,192,196,196],[136,138,194,194],
  [134,140,183,183],[179,181,187,194],[144,164,174,174],[164,164,202,207],[202,202,228,247],
  [226,226,275,279],[273,273,284,309],[239,239,264,277],[228,230,236,245],[187,192,230,234],
  [192,194,213,258],[204,211,230,230],[192,217,228,232],[192,209,213,224],[207,207,296,301],
  [296,299,333,335],[273,277,333,333],[247,251,279,316],[181,183,251,251],[183,183,230,234],
  [217,230,251,254],[230,232,254,279],[228,232,232,234],[204,204,230,264],[196,202,284,301],
  [219,275,286,290],[251,251,269,277],[247,249,279,294],[256,277,301,307],[275,275,288,301],
  [256,256,275,277],[258,262,318,318],[171,275,316,318],[241,264,365,382],[337,363,363,387],
  [350,363,378,483],[342,354,378,406],[314,314,357,363],[314,320,423,423],[397,404,421,429],
  [354,380,402,402],[365,378,404,421],[365,399,410,410],[412,412,459,472],[442,453,496,513],
  [485,498,502,536],[500,500,502,534],[421,421,498,498],[418,419,423,440],[421,421,423,423]
];
const candles = document.getElementById('candles');
bars.forEach(([high, top, bottom, low], i) => {
  const x = i * 16;
  add(candles, 'path', { d: `M${x + 0.5} ${high}V${low + 1}` });
  if (top === bottom) add(candles, 'path', { d: `M${x - 5} ${top + 0.5}h11` });
  else add(candles, 'rect', { x: x - 4.5, y: top + 0.5, width: 10, height: bottom - top });
});

const prices = document.getElementById('prices');
[['1.38085', 133], ['1.38065', 175], ['1.38050', 208], ['1.38030', 251], ['1.38015', 284], ['1.37995', 326],
 ['1.37975', 369], ['1.37935', 455], ['1.37915', 498], ['1.37895', 541]].forEach(([label, y]) => {
  add(prices, 'rect', { x: 0, y, width: 3, height: 1, fill: '#fff' });
  add(prices, 'text', { x: 5, y: y + 4 }, label);
});
add(prices, 'rect', { x: 1, y: 408, width: 41, height: 10, fill: 'red' });
add(prices, 'text', { x: 5, y: 417, style: 'fill:#000' }, '1.37954');
add(prices, 'rect', { x: 1, y: 415, width: 41, height: 11, fill: '#fff' });
add(prices, 'text', { x: 5, y: 424, style: 'fill:#000' }, '1.37951');

const times = document.getElementById('times');
['2014', '14:27', '14:31', '14:35', '14:39', '14:43', '14:47', '14:51', '14:55', '14:59', '15:03', '15:07', '15:11', '15:15']
  .forEach((label, i) => {
    add(times, 'rect', { x: i * 64 + 1, y: 0, width: 1, height: 3, fill: '#fff' });
    add(times, 'text', { x: i * 64 + 1, y: 12 }, '1 Apr ' + label);
  });
```
